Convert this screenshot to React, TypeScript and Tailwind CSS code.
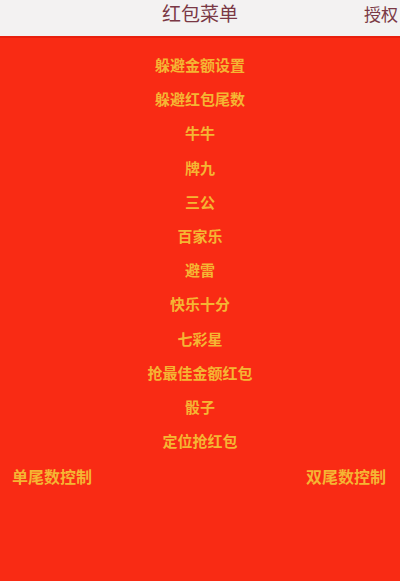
const items = [
  "躲避金额设置",
  "躲避红包尾数",
  "牛牛",
  "牌九",
  "三公",
  "百家乐",
  "避雷",
  "快乐十分",
  "七彩星",
  "抢最佳金额红包",
  "骰子",
  "定位抢红包",
]

export default function App() {
  return (
    <div
      className="w-[400px] h-[581px] flex flex-col bg-[#f92b14] overflow-hidden"
      style={{ fontFamily: '"Noto Sans CJK SC", "Noto Sans", sans-serif' }}
    >
      <header className="relative h-[36px] bg-[#f3f2f2] flex items-center justify-center shrink-0">
        <span className="text-[19px] leading-none text-[#7a3845] -mt-[11px]">红包菜单</span>
        <span className="absolute right-[2px] top-[5px] text-[17px] leading-none text-[#7a3845]">授权</span>
      </header>
      <div className="h-[2px] bg-[#e8200e]" />
      <ul className="flex flex-col items-center pt-[17px]">
        {items.map((item) => (
          <li
            key={item}
            className="h-[34.2px] flex items-start text-[15px] leading-[20px] font-bold text-[#f5b533]"
          >
            {item}
          </li>
        ))}
      </ul>
      <div className="flex justify-between px-[12px] mt-[1px] text-[16px] leading-[20px] font-bold text-[#f5b533]">
        <span>单尾数控制</span>
        <span className="mr-[2px]">双尾数控制</span>
      </div>
    </div>
  )
}
